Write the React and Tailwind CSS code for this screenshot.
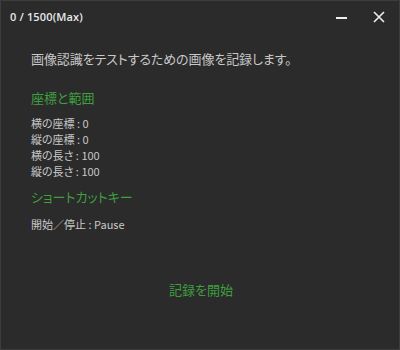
import React from "react";

const jp = "font-['Noto_Sans_CJK_JP','Noto_Sans',sans-serif] [font-feature-settings:'palt']";

const InfoLine = ({ label, value }) => (
  <p className="h-4 leading-4 text-[11px] text-[#c8c8c8]">
    {label} : {value}
  </p>
);

const App = () => {
  return (
    <div className={`w-[400px] h-[350px] bg-[#2b2b2b] border border-[#3d3d3d] flex flex-col ${jp}`}>
      {/* title bar */}
      <div className="h-8 flex items-center pl-[9px]">
        <span className="text-[11px] tracking-[0.15px] font-semibold text-[#e8e8e8] font-['Open_Sans',sans-serif]">
          0 / 1500(Max)
        </span>
        <div className="ml-auto flex items-center">
          <button type="button" className="w-[12px] h-[12px] flex items-center mr-[25px]">
            <span className="block w-[11px] h-[2px] bg-[#eeeeee] mt-[1px]" />
          </button>
          <button type="button" className="mr-[14px]">
            <svg width="12" height="12" viewBox="0 0 12 12">
              <path d="M1 1L11 11M11 1L1 11" stroke="#eeeeee" strokeWidth="1.6" />
            </svg>
          </button>
        </div>
      </div>

      <div className="pl-[30px] flex flex-col">
        <p className="mt-[16px] h-5 leading-5 text-[13px] tracking-[-0.1px] text-[#c8c8c8]">
          画像認識をテストするための画像を記録します。
        </p>
        <p className="mt-[19px] h-5 leading-5 text-[13px] text-[#3f9e3f]">座標と範囲</p>
        <div className="mt-[7px]">
          <InfoLine label="横の座標" value="0" />
          <InfoLine label="縦の座標" value="0" />
          <InfoLine label="横の長さ" value="100" />
          <InfoLine label="縦の長さ" value="100" />
        </div>
        <p className="mt-[8px] h-5 leading-5 text-[13px] text-[#3f9e3f]">ショートカットキー</p>
        <div className="mt-[9px]">
          <InfoLine label="開始／停止" value="Pause" />
        </div>
      </div>

      <div className="mt-[48px] flex justify-center pl-[2px]">
        <button type="button" className="h-5 leading-5 text-[13px] text-[#3f9e3f]">
          記録を開始
        </button>
      </div>
    </div>
  );
};

export default App;
